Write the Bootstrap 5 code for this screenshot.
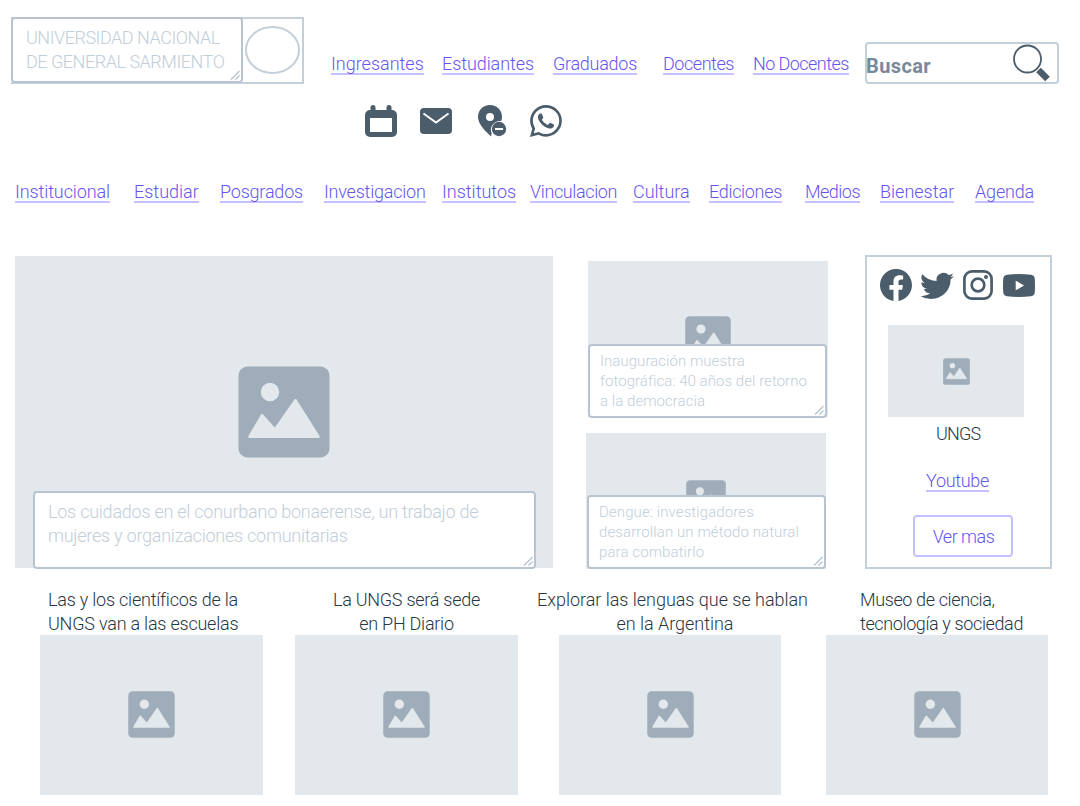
<!DOCTYPE html>
<html lang="es">
<head>
<meta charset="utf-8">
<meta name="viewport" content="width=device-width, initial-scale=1">
<title>Universidad Nacional de General Sarmiento</title>
<link href="https://cdn.jsdelivr.net/npm/bootstrap@5.3.0/dist/css/bootstrap.min.css" rel="stylesheet">
<style>
  :root { --line:#c3cfd9; --edge:#b8c4d0; --fill:#e2e8ec; --slate:#4b5c6b; --violet:#6554f0; --lilac:#c5c0ff; }
  body { font-family: Roboto, "Liberation Sans", sans-serif; font-size: 18px; line-height: 24px; font-weight: 300; color: #273644; background: #fff; }
  svg { display: block; flex: none; }
  .page { width: 1080px; height: 806px; overflow: hidden; }

  .topbar { height: 105px; padding: 17px 21px 0 11px; }
  .brand { width: 293px; height: 67px; border: 2px solid var(--line); border-left: 0; margin-right: 27px; }
  .brand .note { width: 232px; height: 66px; margin-top: -2px; padding: 7px 0 0 13px; white-space: nowrap; letter-spacing: -.47px; }
  .note { position: relative; background: #fff; border: 2px solid var(--edge); border-radius: 4px; color: #c1ced9; }
  .grip { position: absolute; right: 1px; bottom: 1px; }

  .lnk { display: block; height: 23px; line-height: 24px; color: var(--violet); text-decoration: none; border-bottom: 2px solid var(--lilac); white-space: nowrap; }
  .profiles { display: grid; grid-template-columns: 111px 111px 110px 90px 112px; margin-top: 35px; }
  .profiles .lnk, .sections .lnk { justify-self: start; }
  .profiles .lnk:nth-child(1) { width: 93px; }
  .profiles .lnk:nth-child(2) { width: 92px; letter-spacing: -.08px; }
  .profiles .lnk:nth-child(3) { width: 84px; letter-spacing: -.27px; }
  .profiles .lnk:nth-child(4) { width: 71px; letter-spacing: -.45px; }
  .profiles .lnk:nth-child(5) { width: 96px; letter-spacing: -.56px; }

  .search { width: 194px; height: 42px; margin-top: 25px; border: 2px solid var(--line); border-radius: 4px; padding: 0 7px 0 0; }
  .search span { font-size: 20px; font-weight: 700; color: #78899a; letter-spacing: .4px; padding-top: 5px; margin-left: -1px; }

  .quick { height: 75px; padding-left: 365px; color: var(--slate); }
  .quick .mail { margin-left: 24px; }
  .quick .pin { margin-left: 26px; }
  .quick .chat { margin-left: 23px; }

  .sections { display: grid; grid-template-columns: 119px 86px 104px 118px 88px 103px 76px 96px 75px 95px 70px; padding-left: 15px; height: 75px; align-items: start; }
  .sections .lnk:nth-child(1) { width: 95px; letter-spacing: -.1px; }
  .sections .lnk:nth-child(2) { width: 65px; }
  .sections .lnk:nth-child(3) { width: 83px; letter-spacing: -.2px; }
  .sections .lnk:nth-child(4) { width: 102px; letter-spacing: -.22px; }
  .sections .lnk:nth-child(5) { width: 74px; }
  .sections .lnk:nth-child(6) { width: 87px; letter-spacing: -.38px; }
  .sections .lnk:nth-child(7) { width: 57px; }
  .sections .lnk:nth-child(8) { width: 73px; letter-spacing: -.32px; }
  .sections .lnk:nth-child(9) { width: 55px; letter-spacing: -.52px; }
  .sections .lnk:nth-child(10) { width: 74px; }
  .sections .lnk:nth-child(11) { width: 59px; letter-spacing: -.18px; }

  .ph { background: var(--fill); color: #9eadb9; }
  .main { height: 332px; padding: 0 28px 0 15px; }
  .hero { width: 538px; height: 312px; margin-top: 1px; padding: 110px 0 0 18px; }
  .hero > svg { margin-left: 205px; }
  .hero .note { width: 503px; height: 78px; margin-top: 33px; padding: 7px 0 0 13px; letter-spacing: -.24px; white-space: nowrap; }
  .side { width: 242px; margin: 6px 0 0 33px; }
  .story { width: 240px; }
  .story .note { font-size: 15px; line-height: 20px; white-space: nowrap; letter-spacing: .05px; padding: 5px 0 0 10px; width: 239px; height: 74px; }
  .story.one { height: 156px; margin-left: 2px; padding-top: 55px; }
  .story > svg { margin: 0 auto; }
  .story.one .note { margin-top: -18px; }
  .story.two { height: 136px; margin-top: 16px; padding-top: 47px; }
  .story.two .note { margin: -25px 0 0 1px; letter-spacing: .1px; }

  .social { width: 187px; height: 314px; margin-left: auto; border: 2px solid var(--line); color: var(--slate); }
  .social .nets { height: 32px; margin: 12px 0 24px 13px; }
  .nets .insta { margin-left: 9px; }
  .nets .tube { margin-left: 10px; }
  .thumb { width: 136px; height: 92px; margin-left: 21px; }
  .uni { color: #273644; margin: 5px 0 0 69px; letter-spacing: -.8px; }
  .social .lnk { width: 63px; margin: 23px 0 0 59px; letter-spacing: -.31px; }
  .more { width: 100px; height: 42px; margin: 23px 0 0 46px; padding: 0 0 0 1px; border: 2px solid var(--lilac); border-radius: 4px; color: var(--violet); font-size: 18px; font-weight: 300; letter-spacing: -.5px; }

  .news { display: grid; grid-template-columns: 255px 264px 267px 222px; padding: 1px 0 0 40px; }
  .item { width: 223px; }
  .item p { margin: 0; height: 47px; white-space: nowrap; display: flex; flex-direction: column; align-items: center; }
  .item .ph { height: 160px; padding-top: 56px; }
  .item .ph svg { margin: 0 auto; }
  .item:nth-child(n+3) { width: 222px; }
  .item:nth-child(1) p { align-items: flex-start; padding-left: 8px; letter-spacing: -.22px; }
  .item:nth-child(2) p { letter-spacing: -.25px; }
  .item:nth-child(3) p { margin: 0 -26px 0 -22px; letter-spacing: -.03px; padding-left: 1px; }
  .item:nth-child(3) span:last-child { padding-left: 5px; }
  .item:nth-child(4) p { align-items: flex-start; margin-left: 34px; letter-spacing: -.38px; }
</style>
</head>
<body>
<svg width="0" height="0" class="position-absolute">
  <symbol id="photo" viewBox="0 0 92 92">
    <rect x=".5" y=".5" width="91" height="91" rx="9" fill="#9eadb9"/>
    <circle cx="32" cy="26" r="9.2" fill="#e2e8ec"/>
    <path d="M11.500 70.700 24 49.200 37 63.500 57.500 34.200 80.500 70.700Z" fill="#e2e8ec" stroke="#e2e8ec" stroke-width="2.500" stroke-linejoin="round"/>
  </symbol>
  <symbol id="grip" viewBox="0 0 10 10"><path d="M1 9.500 9.500 1M5.500 9.500l4-4" fill="none" stroke="#b5c1cd" stroke-width="1.200"/></symbol>
</svg>

<div class="page">
  <header class="topbar d-flex align-items-start">
    <div class="brand d-flex">
      <div class="note">UNIVERSIDAD NACIONAL<br>DE GENERAL SARMIENTO<svg class="grip" width="10" height="10"><use href="#grip"/></svg></div>
      <svg width="58" height="63" viewBox="0 0 58 63"><ellipse cx="29.500" cy="31" rx="26.500" ry="23" fill="none" stroke="#c3cfd9" stroke-width="2"/></svg>
    </div>
    <nav class="profiles">
      <a class="lnk" href="#">Ingresantes</a><a class="lnk" href="#">Estudiantes</a><a class="lnk" href="#">Graduados</a><a class="lnk" href="#">Docentes</a><a class="lnk" href="#">No Docentes</a>
    </nav>
    <div class="search d-flex align-items-center justify-content-between">
      <span>Buscar</span>
      <svg width="38" height="38" viewBox="0 0 38 38"><circle cx="15.500" cy="15" r="13.500" fill="none" stroke="#4b5c6b" stroke-width="1.800"/><path d="M26.500 26 35.500 35" stroke="#4b5c6b" stroke-width="6.500"/></svg>
    </div>
  </header>

  <div class="quick d-flex align-items-start">
    <svg width="32" height="32" viewBox="0 0 32 32" fill="currentColor"><path fill-rule="evenodd" d="M8 0a2.500 2.500 0 0 1 2.500 2.500V5h11V2.500a2.500 2.500 0 0 1 5 0V5h.5a5 5 0 0 1 5 5v17a5 5 0 0 1-5 5H5a5 5 0 0 1-5-5V10a5 5 0 0 1 5-5h.5V2.500A2.500 2.500 0 0 1 8 0ZM5 13v14h22V13Z"/></svg>
    <svg class="mail" width="31" height="32" viewBox="0 0 31 32" overflow="visible"><rect x="-1" y="3" width="32" height="26" rx="4" fill="currentColor"/><path d="M2.500 8.500 15 17.500 27.500 8.500" fill="none" stroke="#fff" stroke-width="2"/></svg>
    <svg class="pin" width="29" height="32" viewBox="0 0 29 32"><path fill="currentColor" fill-rule="evenodd" d="M12 0c7 0 12 5 12 12 0 1.500-.3 2.700-.8 4a9 9 0 0 0-9.500 12.500L13 31.500C7 26 0 19 0 12 0 5 5 0 12 0Zm0 8a4 4 0 1 0 0 8 4 4 0 0 0 0-8Z"/><circle cx="21" cy="24" r="7.200" fill="currentColor"/><path d="M17 24h8" stroke="#fff" stroke-width="2"/></svg>
    <svg class="chat" width="32" height="32" viewBox="0 0 16 16" fill="currentColor"><path d="M13.601 2.326A7.854 7.854 0 0 0 7.994 0C3.627 0 .068 3.558.064 7.926c0 1.399.366 2.760 1.057 3.965L0 16l4.204-1.102a7.933 7.933 0 0 0 3.790.965h.004c4.368 0 7.926-3.558 7.930-7.930A7.898 7.898 0 0 0 13.600 2.326zM7.994 14.521a6.573 6.573 0 0 1-3.356-.920l-.240-.144-2.494.654.666-2.433-.156-.251a6.560 6.560 0 0 1-1.007-3.505c0-3.626 2.957-6.584 6.591-6.584a6.560 6.560 0 0 1 4.660 1.931 6.557 6.557 0 0 1 1.928 4.660c-.004 3.639-2.961 6.592-6.592 6.592zm3.615-4.934c-.197-.099-1.170-.578-1.353-.646-.182-.065-.315-.099-.445.099-.133.197-.513.646-.627.775-.114.133-.232.148-.430.050-.197-.100-.836-.308-1.592-.985-.590-.525-.985-1.175-1.103-1.372-.114-.198-.011-.304.088-.403.087-.088.197-.232.296-.346.100-.114.133-.198.198-.330.065-.134.034-.248-.015-.347-.050-.099-.445-1.076-.612-1.470-.160-.389-.323-.335-.445-.340-.114-.007-.247-.007-.380-.007a.729.729 0 0 0-.529.247c-.182.198-.691.677-.691 1.654 0 .977.710 1.916.810 2.049.098.133 1.394 2.132 3.383 2.992.470.205.840.326 1.129.418.475.152.904.129 1.246.080.380-.058 1.171-.480 1.338-.943.164-.464.164-.860.114-.943-.049-.084-.182-.133-.380-.232z"/></svg>
  </div>

  <nav class="sections">
    <a class="lnk" href="#">Institucional</a><a class="lnk" href="#">Estudiar</a><a class="lnk" href="#">Posgrados</a><a class="lnk" href="#">Investigacion</a><a class="lnk" href="#">Institutos</a><a class="lnk" href="#">Vinculacion</a><a class="lnk" href="#">Cultura</a><a class="lnk" href="#">Ediciones</a><a class="lnk" href="#">Medios</a><a class="lnk" href="#">Bienestar</a><a class="lnk" href="#">Agenda</a>
  </nav>

  <main class="main d-flex align-items-start">
    <article class="hero ph">
      <svg width="92" height="92"><use href="#photo"/></svg>
      <div class="note">Los cuidados en el conurbano bonaerense, un trabajo de<br>mujeres y organizaciones comunitarias<svg class="grip" width="10" height="10"><use href="#grip"/></svg></div>
    </article>
    <div class="side">
      <article class="story one ph">
        <svg width="46" height="46"><use href="#photo"/></svg>
        <div class="note">Inauguración muestra<br>fotográfica: 40 años del retorno<br>a la democracia<svg class="grip" width="10" height="10"><use href="#grip"/></svg></div>
      </article>
      <article class="story two ph">
        <svg width="40" height="40"><use href="#photo"/></svg>
        <div class="note">Dengue: investigadores<br>desarrollan un método natural<br>para combatirlo<svg class="grip" width="10" height="10"><use href="#grip"/></svg></div>
      </article>
    </div>
    <aside class="social">
      <div class="nets d-flex align-items-center">
        <svg width="32" height="32" viewBox="0 0 16 16" fill="currentColor"><path d="M16 8.049c0-4.446-3.582-8.050-8-8.050C3.580 0-.002 3.603-.002 8.050c0 4.017 2.926 7.347 6.750 7.951v-5.625h-2.030V8.050H6.750V6.275c0-2.017 1.195-3.131 3.022-3.131.876 0 1.791.157 1.791.157v1.980h-1.009c-.993 0-1.303.621-1.303 1.258v1.510h2.218l-.354 2.326H9.250V16c3.824-.604 6.750-3.934 6.750-7.951z"/></svg>
        <svg class="ms-2" width="34" height="32" viewBox="0 0 16 16" preserveAspectRatio="none" fill="currentColor"><path d="M5.026 15c6.038 0 9.341-5.003 9.341-9.334 0-.140 0-.282-.006-.422A6.685 6.685 0 0 0 16 3.542a6.658 6.658 0 0 1-1.889.518 3.301 3.301 0 0 0 1.447-1.817 6.533 6.533 0 0 1-2.087.793A3.286 3.286 0 0 0 7.875 6.030a9.325 9.325 0 0 1-6.767-3.429 3.289 3.289 0 0 0 1.018 4.382A3.323 3.323 0 0 1 .640 6.575v.045a3.288 3.288 0 0 0 2.632 3.218 3.203 3.203 0 0 1-.865.115 3.230 3.230 0 0 1-.614-.057 3.283 3.283 0 0 0 3.067 2.277A6.588 6.588 0 0 1 .780 13.580a6.320 6.320 0 0 1-.780-.045A9.344 9.344 0 0 0 5.026 15z"/></svg>
        <svg class="insta" width="30" height="30" viewBox="0 0 30 30" fill="none" stroke="currentColor" stroke-width="2.700"><rect x="1.400" y="1.400" width="27.200" height="27.200" rx="7.500"/><circle cx="15" cy="15" r="6.300"/><circle cx="23" cy="7" r="2" fill="currentColor" stroke="none"/></svg>
        <svg class="tube" width="32" height="23" viewBox="0 0 32 23"><path fill="currentColor" fill-rule="evenodd" d="M4 .8Q16-.6 28 .8 31.500 1.200 31.800 5 32.200 11.500 31.800 18 31.500 21.800 28 22.200 16 23.600 4 22.200.5 21.800.2 18-.2 11.500.2 5 .5 1.200 4 .8ZM12.700 6.700v9.600L21 11.500Z"/></svg>
      </div>
      <div class="thumb ph d-flex align-items-center justify-content-center"><svg width="27" height="27"><use href="#photo"/></svg></div>
      <div class="uni">UNGS</div>
      <a class="lnk" href="#">Youtube</a>
      <button class="btn more" type="button">Ver mas</button>
    </aside>
  </main>

  <section class="news">
    <article class="item"><p><span>Las y los científicos de la</span><span>UNGS van a las escuelas</span></p><div class="ph"><svg width="47" height="47"><use href="#photo"/></svg></div></article>
    <article class="item"><p><span>La UNGS será sede</span><span>en PH Diario</span></p><div class="ph"><svg width="47" height="47"><use href="#photo"/></svg></div></article>
    <article class="item"><p><span>Explorar las lenguas que se hablan</span><span>en la Argentina</span></p><div class="ph"><svg width="47" height="47"><use href="#photo"/></svg></div></article>
    <article class="item"><p><span>Museo de ciencia,</span><span>tecnología y sociedad</span></p><div class="ph"><svg width="47" height="47"><use href="#photo"/></svg></div></article>
  </section>
</div>
<script src="https://cdn.jsdelivr.net/npm/bootstrap@5.3.0/dist/js/bootstrap.bundle.min.js"></script>
</body>
</html>
